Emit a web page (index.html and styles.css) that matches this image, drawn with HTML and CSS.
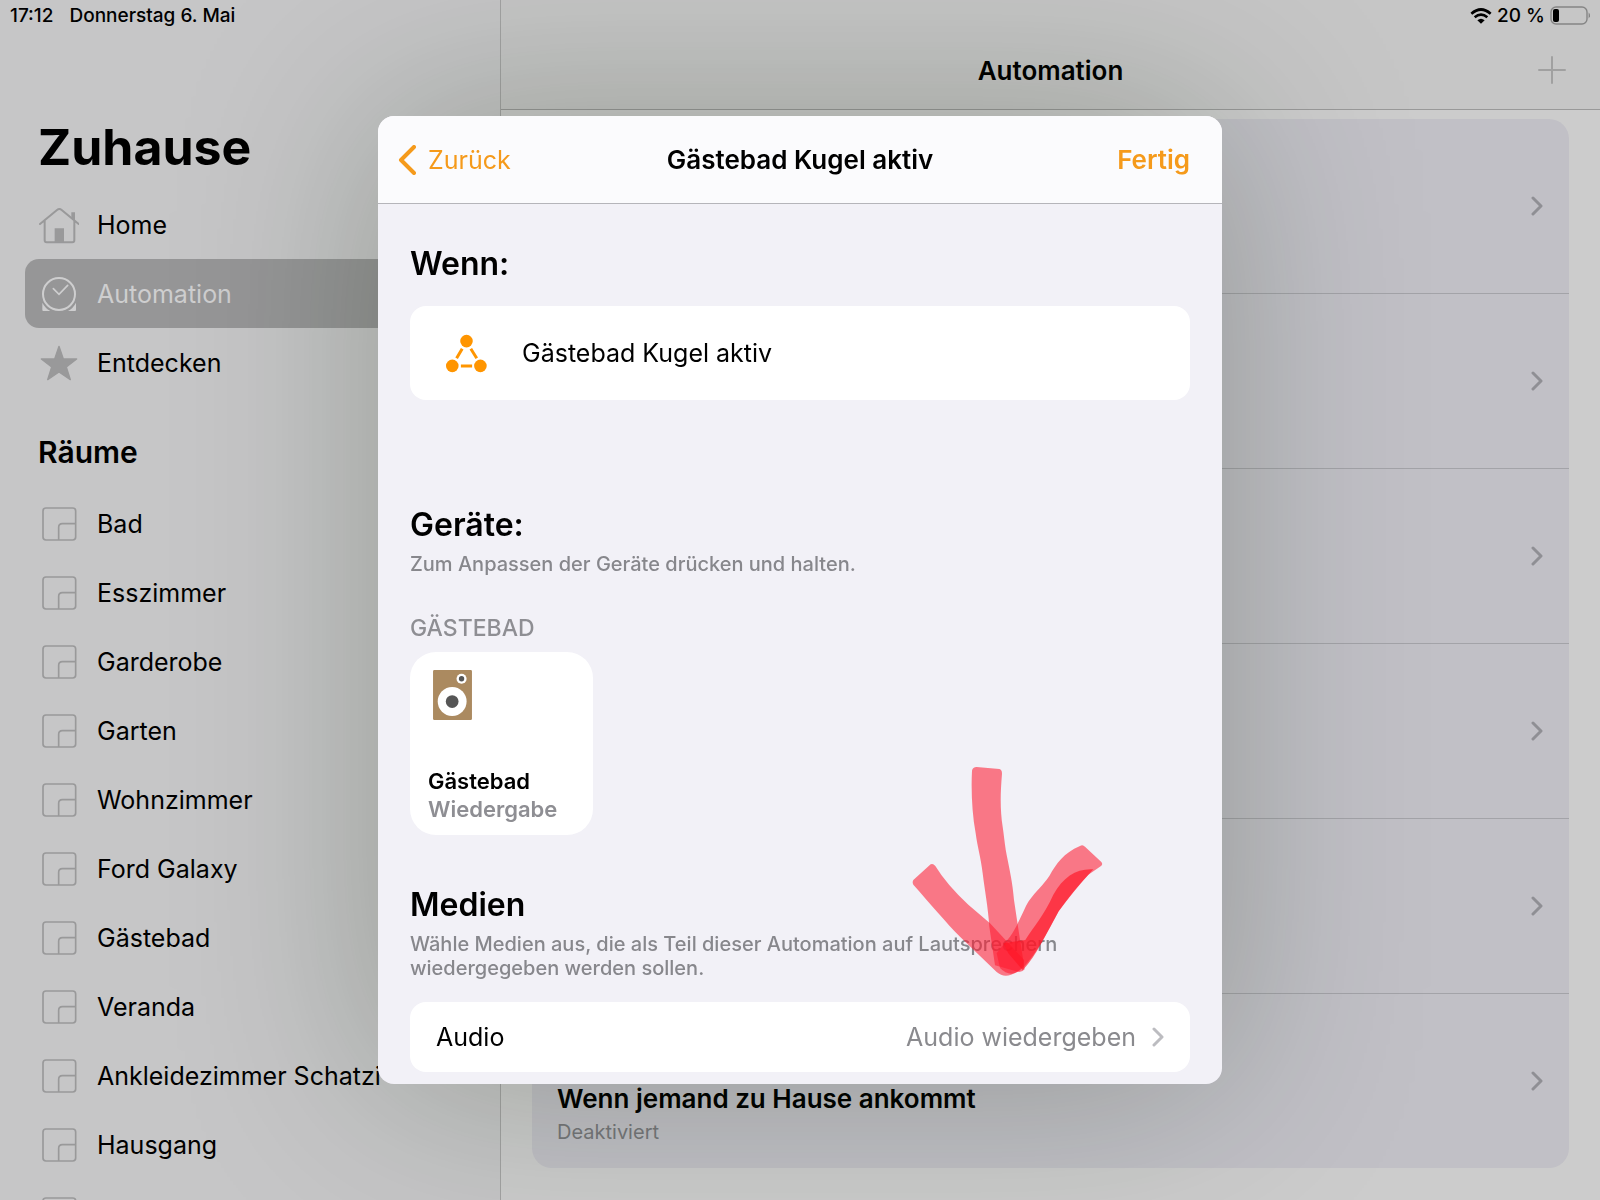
FILE: index.html
```
<!DOCTYPE html>
<html lang="de">

<head>
    <meta charset="UTF-8">
    <meta name="viewport" content="width=device-width, initial-scale=1.0">
    <title>Automation</title>
    <link rel="stylesheet" href="styles.css">
</head>

<body>
    <!-- shared icons -->
    <svg class="sprite" aria-hidden="true">
        <symbol id="room" viewBox="0 0 120 120">
            <rect x="12" y="12" width="98" height="96" rx="9" fill="none" stroke="currentColor" stroke-width="5" />
            <path d="M59 108V70q0-11 11-11h40" fill="none" stroke="currentColor" stroke-width="5" />
        </symbol>
        <symbol id="chevron" viewBox="0 0 12 20">
            <path d="M2 2l8 8-8 8" fill="none" stroke="currentColor" stroke-width="3" stroke-linecap="round" stroke-linejoin="round" />
        </symbol>
    </svg>

    <div class="app">
        <aside class="sidebar">
            <div class="status">
                <span>17:12</span>
                <span>Donnerstag 6. Mai</span>
            </div>
            <h1>Zuhause</h1>
            <nav>
                <ul class="menu">
                    <li><a href="#">
                        <svg class="icon" viewBox="0 0 120 120">
                            <path d="M3 57L54 15q7-6 14 0l51 42M17 47v59q0 6 6 6h77q6 0 6-6V47" fill="none" stroke="currentColor" stroke-width="6" stroke-linecap="round" />
                            <path d="M47 70h28v42H47zM97 22h11v26l-11-9z" fill="currentColor" />
                        </svg>Home</a></li>
                    <li><a href="#" class="current">
                        <svg class="icon" viewBox="0 0 120 120">
                            <circle cx="60" cy="60" r="48" fill="none" stroke="currentColor" stroke-width="6" />
                            <path d="M43 44l17 17 26-27" fill="none" stroke="currentColor" stroke-width="5" stroke-linecap="round" />
                            <path d="M10 86q8 16 24 25H13q-3 0-3-3zM111 86q-8 16-24 25h21q3 0 3-3z" fill="currentColor" />
                        </svg>Automation</a></li>
                    <li><a href="#">
                        <svg class="icon" viewBox="0 0 120 120">
                            <path d="M60 10l13 38h40L82 72l12 38-34-23-34 23 12-38L7 48h40z" fill="currentColor" stroke="currentColor" stroke-width="4" stroke-linejoin="round" />
                        </svg>Entdecken</a></li>
                </ul>
                <h2>Räume</h2>
                <ul class="menu">
                    <li><a href="#"><svg class="icon"><use href="#room" /></svg>Bad</a></li>
                    <li><a href="#"><svg class="icon"><use href="#room" /></svg>Esszimmer</a></li>
                    <li><a href="#"><svg class="icon"><use href="#room" /></svg>Garderobe</a></li>
                    <li><a href="#"><svg class="icon"><use href="#room" /></svg>Garten</a></li>
                    <li><a href="#"><svg class="icon"><use href="#room" /></svg>Wohnzimmer</a></li>
                    <li><a href="#"><svg class="icon"><use href="#room" /></svg>Ford Galaxy</a></li>
                    <li><a href="#"><svg class="icon"><use href="#room" /></svg>Gästebad</a></li>
                    <li><a href="#"><svg class="icon"><use href="#room" /></svg>Veranda</a></li>
                    <li><a href="#"><svg class="icon"><use href="#room" /></svg>Ankleidezimmer Schatzi</a></li>
                    <li><a href="#"><svg class="icon"><use href="#room" /></svg>Hausgang</a></li>
                    <li><a href="#"><svg class="icon"><use href="#room" /></svg></a></li>
                </ul>
            </nav>
        </aside>

        <main class="main">
            <header class="topbar">
                <div class="status right">
                    <svg class="wifi" viewBox="0 0 66 48">
                        <path d="M4 17q29-25 58 0M14 28q19-16 38 0" fill="none" stroke="currentColor" stroke-width="8" />
                        <path d="M33 47L22 37q11-9 22 0z" fill="currentColor" />
                    </svg>
                    <span>20 %</span>
                    <svg class="battery" viewBox="0 0 40 20">
                        <rect x="1" y="1" width="36" height="17" rx="5" fill="none" stroke="#858585" stroke-width="1.4" />
                        <rect x="3" y="3" width="6" height="13" rx="2" fill="#000" />
                        <path d="M38.600 6.500q3 3 0 6z" fill="#858585" />
                    </svg>
                </div>
                <div class="bar">
                    <h2>Automation</h2>
                    <button class="add" aria-label="Hinzufügen">
                        <svg viewBox="0 0 28 28"><path d="M14 1v26M1 14h26" stroke="currentColor" stroke-width="2" stroke-linecap="round" /></svg>
                    </button>
                </div>
            </header>
            <ul class="list">
                <li><a href="#" aria-label="Automation"><svg class="chevron"><use href="#chevron" /></svg></a></li>
                <li><a href="#" aria-label="Automation"><svg class="chevron"><use href="#chevron" /></svg></a></li>
                <li><a href="#" aria-label="Automation"><svg class="chevron"><use href="#chevron" /></svg></a></li>
                <li><a href="#" aria-label="Automation"><svg class="chevron"><use href="#chevron" /></svg></a></li>
                <li><a href="#" aria-label="Automation"><svg class="chevron"><use href="#chevron" /></svg></a></li>
                <li><a href="#">
                    <div class="info">
                        <strong>Wenn jemand zu Hause ankommt</strong>
                        <span>Deaktiviert</span>
                    </div>
                    <svg class="chevron"><use href="#chevron" /></svg>
                </a></li>
            </ul>
        </main>
    </div>

    <div class="overlay">
        <section class="modal" role="dialog" aria-labelledby="modal_title">
            <header class="modal_head">
                <button class="back">
                    <svg viewBox="0 0 18 30"><path d="M16 2L3 15l13 13" fill="none" stroke="currentColor" stroke-width="4" stroke-linecap="round" stroke-linejoin="round" /></svg>
                    Zurück
                </button>
                <h2 id="modal_title">Gästebad Kugel aktiv</h2>
                <button class="done">Fertig</button>
            </header>
            <div class="modal_body">
                <h3>Wenn:</h3>
                <div class="card trigger">
                    <svg viewBox="226 700 124 120">
                        <g fill="#ff9500">
                            <circle cx="288" cy="724" r="19" />
                            <circle cx="245" cy="799" r="19" />
                            <circle cx="330" cy="799" r="19" />
                        </g>
                        <path d="M275 747l-17 29M301 747l18 29M271 799h34" stroke="#ff9500" stroke-width="9" />
                    </svg>
                    <span>Gästebad Kugel aktiv</span>
                </div>

                <h3 class="devices">Geräte:</h3>
                <p>Zum Anpassen der Geräte drücken und halten.</p>
                <h4>GÄSTEBAD</h4>
                <button class="tile">
                    <svg viewBox="0 0 116 149">
                        <rect width="116" height="149" rx="4" fill="#ab8a60" />
                        <circle cx="57" cy="94" r="43" fill="#fff" />
                        <circle cx="57" cy="94" r="19" fill="#565656" />
                        <circle cx="85" cy="26" r="15" fill="#fff" />
                        <circle cx="85" cy="26" r="8" fill="#565656" />
                    </svg>
                    <span class="name">Gästebad</span>
                    <span class="state">Wiedergabe</span>
                </button>

                <h3 class="media">Medien</h3>
                <p>Wähle Medien aus, die als Teil dieser Automation auf Lautsprechern wiedergegeben werden sollen.</p>
                <a href="#" class="card audio">
                    <span>Audio</span>
                    <span class="value">Audio wiedergeben</span>
                    <svg class="chevron"><use href="#chevron" /></svg>
                </a>
            </div>

            <!-- marker arrow -->
            <svg class="marker" viewBox="0 0 699 720" aria-hidden="true">
                <g fill="#ff1a30" fill-opacity=".57">
                    <path d="M276 92q2-11 14-11l68 6q8 2 8 14C361 160 360 210 368 260C373 295 375 320 380 345C390 395 398 430 402 480L414 560L434 688Q424 700 408 694L345 676L328 560C324 500 314 450 308 400C302 350 292 320 287 280C276 220 273 150 276 92z" />
                    <path d="M100 420L152 373q7-4 14 5Q200 434 265 494L330 550L432 660Q434 682 410 696Q375 718 350 696L240 590C200 550 150 490 100 434q-4-7 0-14z" />
                    <path d="M600 318q8-6 15 2l49 46q6 7-2 13L625 404C590 440 560 480 536 514C500 580 470 640 432 680Q395 720 360 684L350 640L390 590C415 555 430 510 446 484C470 450 488 438 508 408C530 370 550 340 600 318z" />
                </g>
                <path d="M640 388C590 385 550 410 520 464C490 530 460 560 436 600L370 610L385 640L428 690C460 660 490 600 536 514C565 475 600 430 640 388z" fill="#ff1424" fill-opacity=".65" />
            </svg>
        </section>
    </div>
</body>

</html>
```
FILE: styles.css
```
* {
    margin: 0;
    padding: 0;
    box-sizing: border-box;
}

body {
    font-family: Inter, "Liberation Sans", sans-serif;
    font-size: 25px;
    color: #000;
    background-color: #ccc;
}

ul {
    list-style: none;
}

a {
    color: inherit;
    text-decoration: none;
}

button {
    border: 0;
    background: none;
    font: inherit;
    cursor: pointer;
}

.sprite {
    display: none;
}

.app {
    display: flex;
    height: 100vh;
    overflow: hidden;
}

.status {
    display: flex;
    align-items: center;
    gap: 16px;
    height: 31px;
    padding: 0 10px;
    font-size: 19px;
    font-weight: 500;
}

.status.right {
    justify-content: flex-end;
    gap: 5px;
}

.wifi {
    width: 22px;
    height: 16px;
}

.battery {
    width: 40px;
    height: 20px;
}

/* sidebar */

.sidebar {
    flex: none;
    width: 501px;
    border-right: 1px solid #a3a3a3;
    background-color: #c6c6c7;
}

.sidebar h1 {
    padding: 86px 38px 13px;
    font-size: 50px;
    line-height: 60px;
}

.sidebar h2 {
    padding: 35px 38px 17px;
    font-size: 30px;
    font-weight: 600;
    line-height: 40px;
}

.menu a {
    display: flex;
    align-items: center;
    gap: 18px;
    height: 69px;
    margin: 0 25px;
    padding: 0 14px;
    border-radius: 14px;
    white-space: nowrap;
}

.menu .icon {
    flex: none;
    width: 40px;
    height: 40px;
    color: #99999a;
}

.menu .current {
    background-color: #969697;
    color: #cececf;
}

.menu .current .icon {
    color: #cececf;
}

/* main column */

.main {
    flex: 1;
}

.topbar {
    height: 110px;
    border-bottom: 1px solid #999;
    background-color: #c6c6c6;
}

.bar {
    display: grid;
    grid-template-columns: 1fr auto 1fr;
    align-items: center;
    height: 78px;
    padding: 0 34px;
}

.bar h2 {
    grid-column: 2;
    font-size: 26px;
    font-weight: 600;
}

.add {
    justify-self: end;
    width: 28px;
    height: 28px;
    color: #a0a0a0;
}

.add svg {
    display: block;
}

.list {
    margin: 9px 31px 31px;
    border-radius: 20px;
    background-color: #c1c0c6;
}

.list li + li {
    border-top: 1px solid #a3a3a8;
}

.list a {
    display: flex;
    align-items: center;
    justify-content: flex-end;
    height: 174px;
    padding: 0 26px 0 25px;
}

.chevron {
    flex: none;
    width: 12px;
    height: 20px;
    color: #8f8f94;
}

.info {
    display: flex;
    flex: 1;
    flex-direction: column;
    align-self: flex-end;
    padding-bottom: 22px;
}

.info strong {
    font-size: 26px;
    font-weight: 600;
    line-height: 38px;
}

.info span {
    color: #77777b;
    font-size: 20px;
    line-height: 28px;
}

/* modal */

.overlay {
    display: flex;
    position: fixed;
    inset: 0;
    align-items: center;
    justify-content: center;
}

.modal {
    position: relative;
    width: 844px;
    max-width: 100%;
    border-radius: 16px;
    background-color: #f2f1f7;
    box-shadow: 0 0 200px rgba(10, 30, 0, 0.26);
}

.modal_head {
    display: grid;
    grid-template-columns: 1fr auto 1fr;
    align-items: center;
    height: 88px;
    padding: 0 20px;
    border-bottom: 1px solid #b5b5ba;
    border-radius: 16px 16px 0 0;
    background-color: #fbfbfd;
}

.modal_head h2 {
    font-size: 26px;
    font-weight: 600;
}

.back {
    display: flex;
    justify-self: start;
    align-items: center;
    gap: 12px;
}

.back svg {
    width: 18px;
    height: 30px;
}

.modal_head button {
    color: #f59a1b;
}

.modal_head .done {
    justify-self: end;
    padding-right: 12px;
    font-size: 26px;
    font-weight: 600;
}

.modal_body {
    padding: 40px 32px 12px;
}

.modal_body h3 {
    font-size: 32px;
    font-weight: 600;
    line-height: 40px;
}

.modal_body p {
    margin-top: 7px;
    color: #87878c;
    font-size: 20px;
    font-weight: 500;
    line-height: 24px;
}

.modal_body h4 {
    margin: 38px 0 10px;
    color: #8e8e93;
    font-size: 23px;
    font-weight: 500;
    line-height: 28px;
}

.card {
    display: flex;
    align-items: center;
    margin-top: 22px;
    border-radius: 16px;
    background-color: #fff;
}

.trigger {
    gap: 35px;
    height: 94px;
    padding: 0 36px;
}

.trigger svg {
    width: 41px;
    height: 40px;
}

.modal_body .devices {
    margin-top: 105px;
}

.tile {
    display: flex;
    flex-direction: column;
    width: 183px;
    height: 183px;
    padding: 18px 18px 12px;
    border-radius: 26px;
    background-color: #fff;
    font-size: 22px;
    font-weight: 600;
    line-height: 28px;
    text-align: left;
}

.tile svg {
    width: 39px;
    height: 50px;
    margin: 0 5px auto;
}

.tile .state {
    color: #8e8e93;
}

.modal_body .media {
    margin-top: 50px;
}

.audio {
    height: 70px;
    padding: 0 26px;
}

.audio .value {
    margin-left: auto;
    margin-right: 16px;
    color: #8a8a8e;
}

.audio .chevron {
    color: #bcbcc0;
}

.marker {
    position: absolute;
    left: 502px;
    top: 624px;
    width: 233px;
    height: 240px;
    pointer-events: none;
}
```
